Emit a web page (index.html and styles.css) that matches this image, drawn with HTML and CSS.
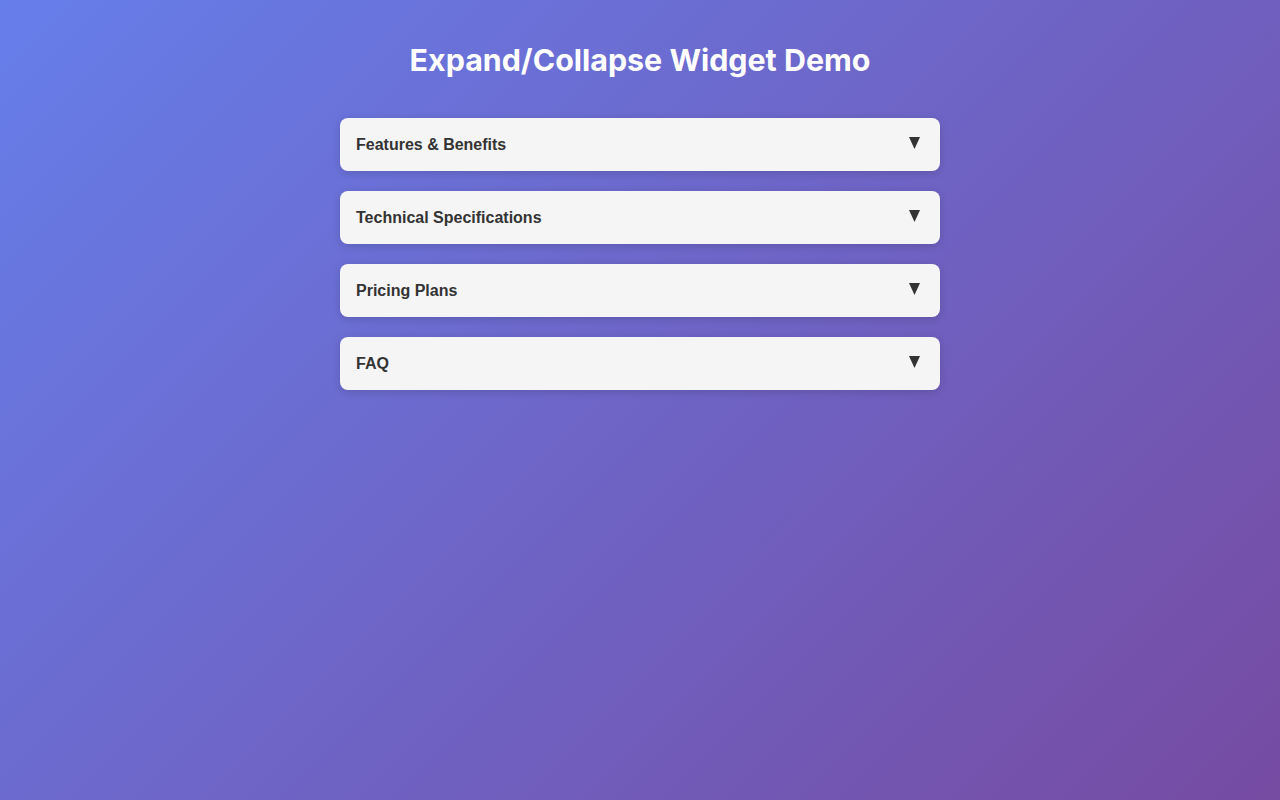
FILE: index.html
```html
<!DOCTYPE html>
<html lang="en">
<head>
<meta charset="utf-8">
<title>Expand/Collapse Widget Demo</title>
<link rel="stylesheet" href="styles.css">
</head>
<body>
<div class="page">
  <h1 class="title">Expand/Collapse Widget Demo</h1>
  <div class="list">
    <div class="item"><span class="label">Features &amp; Benefits</span><svg class="arrow" width="11" height="12" viewBox="0 0 11 12"><polygon points="0,0 11,0 5.5,12"/></svg></div>
    <div class="item"><span class="label">Technical Specifications</span><svg class="arrow" width="11" height="12" viewBox="0 0 11 12"><polygon points="0,0 11,0 5.5,12"/></svg></div>
    <div class="item"><span class="label">Pricing Plans</span><svg class="arrow" width="11" height="12" viewBox="0 0 11 12"><polygon points="0,0 11,0 5.5,12"/></svg></div>
    <div class="item"><span class="label">FAQ</span><svg class="arrow" width="11" height="12" viewBox="0 0 11 12"><polygon points="0,0 11,0 5.5,12"/></svg></div>
  </div>
</div>
</body>
</html>
```
FILE: styles.css
```css
html, body {
  margin: 0;
  padding: 0;
  height: 100%;
}
body {
  background: linear-gradient(135deg, #667eea 0%, #764ba2 100%);
  font-family: "Liberation Sans", Arial, sans-serif;
}
.page {
  padding: 20px;
}
.title {
  font-family: Inter, "Liberation Sans", sans-serif;
  font-weight: 700;
  font-size: 30.4px;
  color: #ffffff;
  text-align: center;
  margin: 22px 0 39px;
  line-height: 37px;
}
.list {
  width: 600px;
  margin: 0 auto;
  display: flex;
  flex-direction: column;
  gap: 20px;
}
.item {
  background: #f5f5f5;
  border-radius: 8px;
  box-shadow: 0 2px 8px rgba(0, 0, 0, 0.15);
  height: 53px;
  box-sizing: border-box;
  padding: 0 16px;
  display: flex;
  align-items: center;
  justify-content: space-between;
}
.label {
  font-weight: 700;
  font-size: 16px;
  color: #333333;
}
.arrow {
  fill: #333333;
  margin: -3px 4px 0 0;
  display: block;
}
```
